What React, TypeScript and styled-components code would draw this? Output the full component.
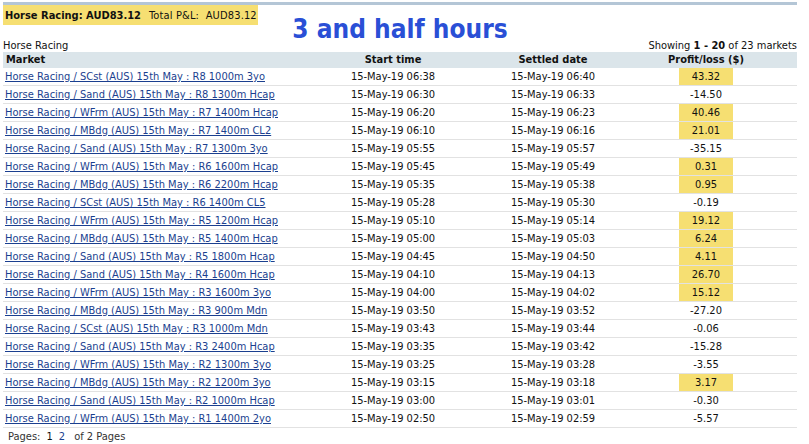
import React from "react";
import styled, { createGlobalStyle } from "styled-components";

const Global = createGlobalStyle`
  html, body { margin: 0; padding: 0; background: #fff; }
  body { font-family: "DejaVu Sans Condensed", "DejaVu Sans", sans-serif; font-size: 11px; color: #111; }
`;

const Page = styled.div`
  width: 809px;
  padding: 2px 12px 0 3px;
  box-sizing: border-box;
`;

const TopRule = styled.div`
  height: 3px;
  background: #b4c6d6;
`;

const TopRow = styled.div`
  display: grid;
  grid-template-columns: 255px 1fr 255px;
  align-items: start;
  height: 35px;
`;

const Summary = styled.div`
  background: #f6df72;
  height: 20px;
  display: flex;
  align-items: center;
  padding-left: 2px;
  font-size: 11px;
  white-space: nowrap;
  gap: 8px;
`;

const Strong = styled.b`
  font-weight: bold;
`;

const Plain = styled.span`
  letter-spacing: 0.15px;
`;

const Title = styled.div`
  text-align: center;
  color: #2a4fd6;
  font-family: "DejaVu Sans Condensed", "DejaVu Sans", sans-serif;
  font-weight: bold;
  font-size: 26px;
  line-height: 30px;
  margin-top: 9px;
  white-space: nowrap;
`;

const InfoRow = styled.div`
  display: flex;
  justify-content: space-between;
  align-items: flex-end;
  height: 12px;
  line-height: 12px;
`;

const Table = styled.table`
  width: 794px;
  border-collapse: collapse;
  table-layout: fixed;
`;

const Th = styled.th<{ $align?: string }>`
  background: #dbe5ea;
  height: 16px;
  padding: 0 3px;
  font-weight: bold;
  text-align: ${(p) => p.$align || "center"};
  line-height: 16px;
`;

const Td = styled.td<{ $align?: string }>`
  height: 17px;
  padding: 0 2px;
  border-bottom: 1px solid #e2e2e2;
  text-align: ${(p) => p.$align || "center"};
  white-space: nowrap;
  line-height: 17px;
`;

const Link = styled.a`
  color: #1b3f8f;
  text-decoration: underline;
`;

const Amount = styled.span<{ $pos: boolean }>`
  display: inline-block;
  width: 54px;
  height: 17px;
  background: ${(p) => (p.$pos ? "#f6df72" : "transparent")};
`;

const Pager = styled.div`
  padding: 2px 0 0 5px;
  color: #333;
  display: flex;
  gap: 6px;
  line-height: 13px;
`;

const PageLink = styled.span<{ $current?: boolean }>`
  color: ${(p) => (p.$current ? "#111" : "#1b3f8f")};
`;

const rows: [string, string, string, string][] = [
  ["Horse Racing / SCst (AUS) 15th May : R8 1000m 3yo", "06:38", "06:40", "43.32"],
  ["Horse Racing / Sand (AUS) 15th May : R8 1300m Hcap", "06:30", "06:33", "-14.50"],
  ["Horse Racing / WFrm (AUS) 15th May : R7 1400m Hcap", "06:20", "06:23", "40.46"],
  ["Horse Racing / MBdg (AUS) 15th May : R7 1400m CL2", "06:10", "06:16", "21.01"],
  ["Horse Racing / Sand (AUS) 15th May : R7 1300m 3yo", "05:55", "05:57", "-35.15"],
  ["Horse Racing / WFrm (AUS) 15th May : R6 1600m Hcap", "05:45", "05:49", "0.31"],
  ["Horse Racing / MBdg (AUS) 15th May : R6 2200m Hcap", "05:35", "05:38", "0.95"],
  ["Horse Racing / SCst (AUS) 15th May : R6 1400m CL5", "05:28", "05:30", "-0.19"],
  ["Horse Racing / WFrm (AUS) 15th May : R5 1200m Hcap", "05:10", "05:14", "19.12"],
  ["Horse Racing / MBdg (AUS) 15th May : R5 1400m Hcap", "05:00", "05:03", "6.24"],
  ["Horse Racing / Sand (AUS) 15th May : R5 1800m Hcap", "04:45", "04:50", "4.11"],
  ["Horse Racing / Sand (AUS) 15th May : R4 1600m Hcap", "04:10", "04:13", "26.70"],
  ["Horse Racing / WFrm (AUS) 15th May : R3 1600m 3yo", "04:00", "04:02", "15.12"],
  ["Horse Racing / MBdg (AUS) 15th May : R3 900m Mdn", "03:50", "03:52", "-27.20"],
  ["Horse Racing / SCst (AUS) 15th May : R3 1000m Mdn", "03:43", "03:44", "-0.06"],
  ["Horse Racing / Sand (AUS) 15th May : R3 2400m Hcap", "03:35", "03:42", "-15.28"],
  ["Horse Racing / WFrm (AUS) 15th May : R2 1300m 3yo", "03:25", "03:28", "-3.55"],
  ["Horse Racing / MBdg (AUS) 15th May : R2 1200m 3yo", "03:15", "03:18", "3.17"],
  ["Horse Racing / Sand (AUS) 15th May : R2 1000m Hcap", "03:00", "03:01", "-0.30"],
  ["Horse Racing / WFrm (AUS) 15th May : R1 1400m 2yo", "02:50", "02:59", "-5.57"],
];

export default function App() {
  return (
    <>
      <Global />
      <Page>
        <TopRule />
        <TopRow>
          <Summary>
            <Strong>Horse Racing: AUD83.12</Strong>
            <Plain>Total P&amp;L:&nbsp; AUD83.12</Plain>
          </Summary>
          <Title>3 and half hours</Title>
          <div />
        </TopRow>
        <InfoRow>
          <span>Horse Racing</span>
          <span>
            Showing <Strong>1 - 20</Strong> of 23 markets
          </span>
        </InfoRow>
        <Table>
          <colgroup>
            <col style={{ width: 292 }} />
            <col style={{ width: 196 }} />
            <col style={{ width: 124 }} />
            <col style={{ width: 182 }} />
          </colgroup>
          <thead>
            <tr>
              <Th $align="left">Market</Th>
              <Th>Start time</Th>
              <Th>Settled date</Th>
              <Th>Profit/loss ($)</Th>
            </tr>
          </thead>
          <tbody>
            {rows.map(([m, s, e, v]) => (
              <tr key={m}>
                <Td $align="left">
                  <Link href="#">{m}</Link>
                </Td>
                <Td>15-May-19 {s}</Td>
                <Td>15-May-19 {e}</Td>
                <Td>
                  <Amount $pos={!v.startsWith("-")}>{v}</Amount>
                </Td>
              </tr>
            ))}
          </tbody>
        </Table>
        <Pager>
          <span>Pages:</span>
          <PageLink $current>1</PageLink>
          <PageLink>2</PageLink>
          <span>&nbsp;of 2 Pages</span>
        </Pager>
      </Page>
    </>
  );
}
